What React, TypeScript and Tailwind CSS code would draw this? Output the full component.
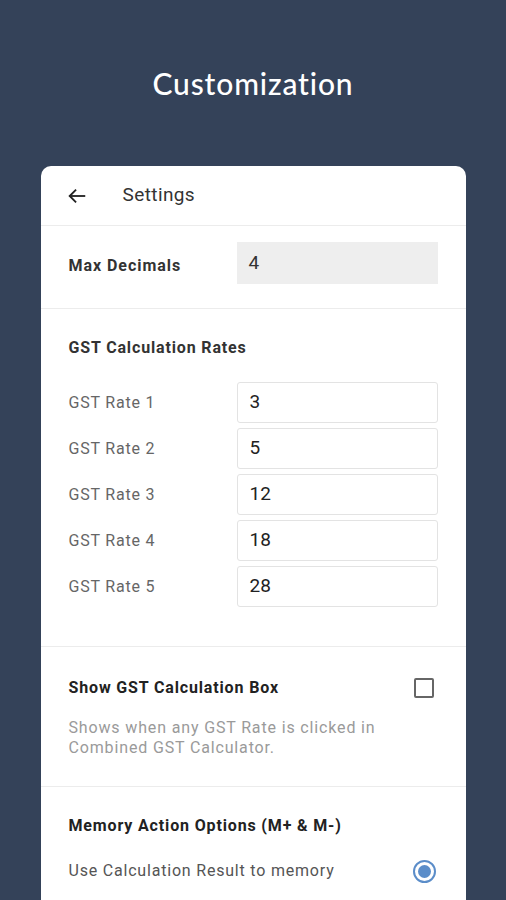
import React from "react";

const rates = ["3", "5", "12", "18", "28"];

export default function App() {
  return (
    <div className="w-[506px] h-[900px] overflow-hidden bg-[#344259] flex flex-col items-center" style={{ fontFamily: "Roboto, 'Noto Sans', sans-serif" }}>
      <div className="h-[166px] flex items-start justify-center pt-[63px] w-full">
        <h1 className="text-white text-[30px] leading-[40px] tracking-[0.85px]" style={{ fontFamily: "Lato, 'Open Sans', sans-serif", fontWeight: 500 }}>Customization</h1>
      </div>
      <div className="w-[425px] flex-1 bg-white rounded-t-[10px] flex flex-col">
        {/* header */}
        <div className="h-[60px] flex items-center border-b border-[#ececec] pl-[25px]">
          <svg width="22" height="22" viewBox="0 0 24 24" fill="none" stroke="#222" strokeWidth="2" strokeLinecap="square">
            <path d="M20 12H5" />
            <path d="M11 5l-7 7 7 7" strokeLinecap="butt" />
          </svg>
          <span className="ml-[35px] text-[19px] tracking-[0.4px] text-[#333]">Settings</span>
        </div>
        {/* max decimals */}
        <div className="h-[83px] flex items-start justify-between px-[28px] pt-[16px] border-b border-[#ececec]">
          <span className="text-[16px] font-bold text-[#333] tracking-[0.95px] leading-[42px] pt-[3px]">Max Decimals</span>
          <div className="w-[201px] h-[42px] bg-[#eeeeee] flex items-center px-[12px] text-[19px] text-[#333]">4</div>
        </div>
        {/* gst rates */}
        <div className="px-[28px] pt-[28px] pb-[39px] border-b border-[#ececec] flex flex-col">
          <div className="text-[16px] font-bold text-[#333] leading-[22px] tracking-[0.85px]">GST Calculation Rates</div>
          <div className="mt-[23px] flex flex-col gap-[5px]">
            {rates.map((r, i) => (
              <div key={i} className="flex items-center justify-between">
                <span className="text-[16px] text-[#666] tracking-[0.8px]">GST Rate {i + 1}</span>
                <div className="w-[201px] h-[41px] border border-[#e3e3e3] rounded-[3px] flex items-center px-[12px] text-[19px] text-[#222]">{r}</div>
              </div>
            ))}
          </div>
        </div>
        {/* show gst box */}
        <div className="px-[28px] pt-[29px] pb-[28px] border-b border-[#ececec]">
          <div className="flex items-center justify-between">
            <span className="text-[16px] font-bold text-[#222] leading-[24px] tracking-[0.85px]">Show GST Calculation Box</span>
            <div className="w-[20px] h-[20px] border-2 border-[#666] rounded-[2px] mr-[4px]" />
          </div>
          <div className="mt-[18px] text-[16px] leading-[20px] text-[#9a9a9a] tracking-[0.85px]">
            Shows when any GST Rate is clicked in<br />Combined GST Calculator.
          </div>
        </div>
        {/* memory */}
        <div className="px-[28px] pt-[27px]">
          <div className="text-[16px] font-bold text-[#222] leading-[24px] tracking-[0.85px]">Memory Action Options (M+ &amp; M-)</div>
          <div className="mt-[21px] flex items-center justify-between">
            <span className="text-[16px] text-[#555] leading-[24px] tracking-[0.8px]">Use Calculation Result to memory</span>
            <div className="w-[23px] h-[23px] rounded-full border-2 border-[#5b8dc9] flex items-center justify-center mr-[2px]">
              <div className="w-[13px] h-[13px] rounded-full bg-[#5b8dc9]" />
            </div>
          </div>
        </div>
      </div>
    </div>
  );
}
